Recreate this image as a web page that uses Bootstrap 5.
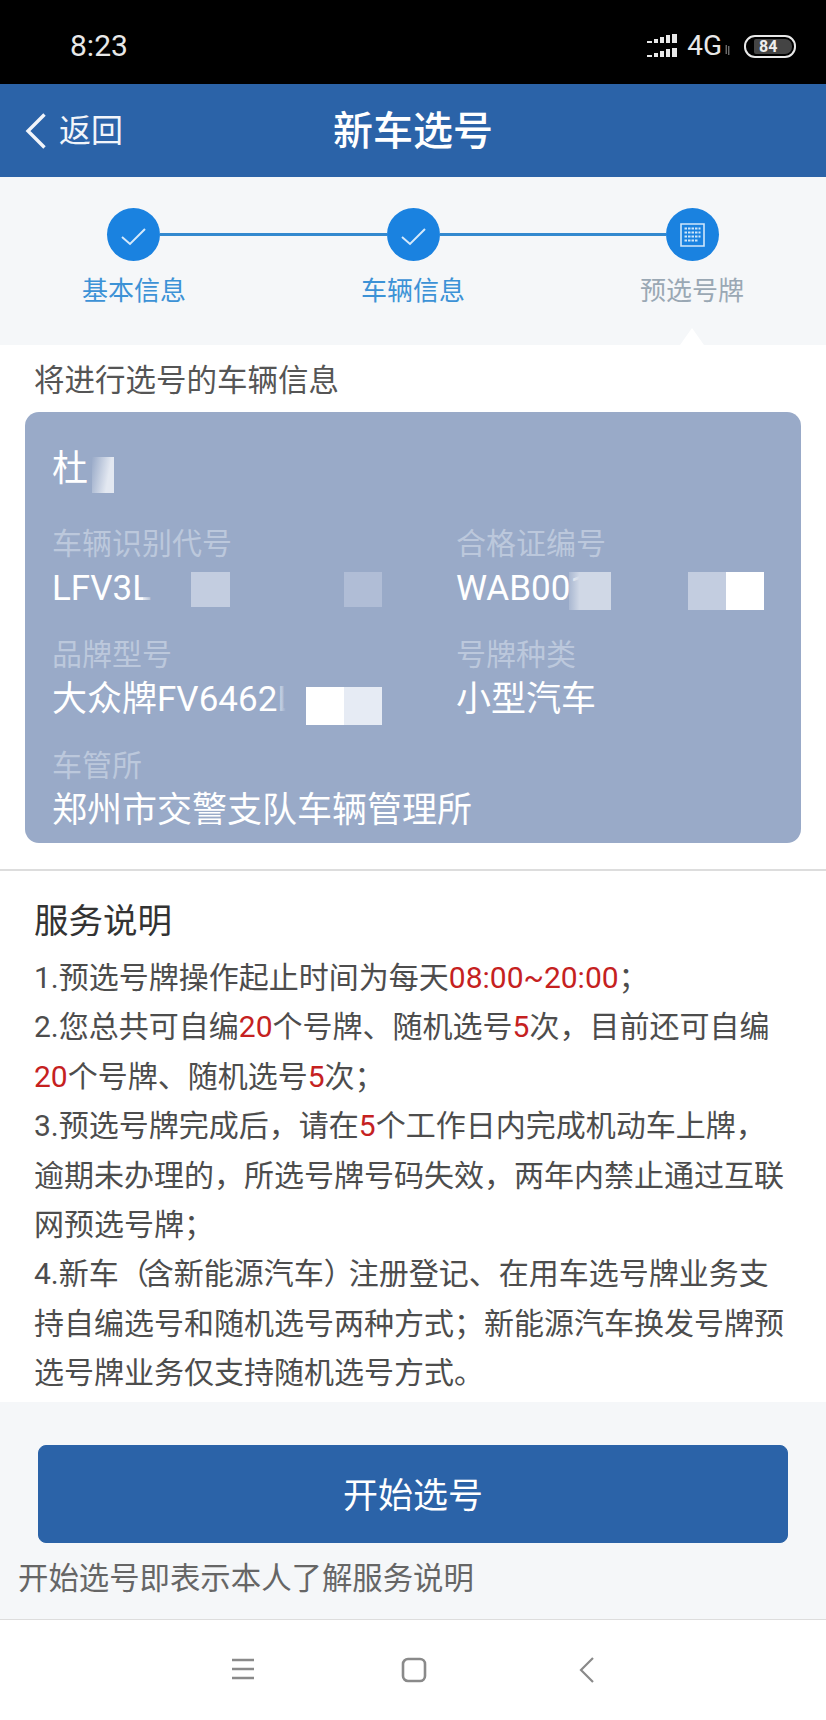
<!DOCTYPE html>
<html lang="zh-CN">
<head>
    <meta charset="UTF-8">
    <title>新车选号</title>
    <meta name="viewport" content="width=device-width, initial-scale=1">
    <link href="https://cdn.jsdelivr.net/npm/bootstrap@5.3.2/dist/css/bootstrap.min.css" rel="stylesheet">
    <script src="https://cdn.jsdelivr.net/npm/bootstrap@5.3.2/dist/js/bootstrap.bundle.min.js"></script>
    <style>
        body {
            font-family: Roboto, "Noto Sans CJK SC", sans-serif;
            background-color: #fff;
            margin: 0;
        }
        .phone {
            width: 826px;
            height: 1720px;
            overflow: hidden;
        }
        /* status bar */
        .status-bar {
            height: 84px;
            background-color: #000;
            color: #e8e8e8;
            padding: 8px 30px 0 70px;
        }
        .status-time {
            font-size: 30px;
            line-height: 32px;
        }
        .status-4g {
            font-size: 28px;
            line-height: 30px;
            margin-left: 10px;
        }
        .status-arrows {
            margin: 8px 14px 0 3px;
        }
        .battery {
            width: 52px;
            height: 23px;
            border: 2px solid #e8e8e8;
            border-radius: 11px;
            padding: 2px 2px 2px 8px;
        }
        .battery-fill {
            height: 100%;
            width: 100%;
            background-color: #444;
            border-radius: 2px 7px 7px 2px;
            color: #eee;
            font-size: 16px;
            font-weight: 700;
            line-height: 15px;
            padding-left: 5px;
        }
        /* title bar */
        .title-bar {
            height: 93px;
            padding-top: 2px;
            background-color: #2b63a8;
            color: #fff;
        }
        .back-link {
            left: 25px;
            top: 28px;
            font-size: 32px;
            line-height: 38px;
            gap: 13px;
            color: #f2f5fa;
        }
        .page-title {
            font-size: 40px;
            font-weight: 500;
            line-height: 50px;
            margin: 0;
        }
        /* steps */
        .steps {
            height: 168px;
            background-color: #f5f7f9;
            padding-top: 31px;
        }
        .step-track {
            padding: 0 107px;
        }
        .step-dot {
            width: 53px;
            height: 53px;
            border-radius: 50%;
            background-color: #1a82e0;
            flex: none;
        }
        .step-line {
            height: 3px;
            background-color: #3389cf;
            flex: 1;
        }
        .step-labels {
            padding: 0 59px;
            margin-top: 10px;
        }
        .step-label {
            width: 150px;
            text-align: center;
            font-size: 26px;
            line-height: 40px;
            color: #3c92d6;
        }
        .step-label-now {
            color: #9aa8b4;
        }
        .step-pointer {
            left: 680px;
            bottom: 0;
            width: 0;
            height: 0;
            border-left: 12px solid transparent;
            border-right: 12px solid transparent;
            border-bottom: 17px solid #fff;
        }
        /* vehicle card */
        .main-area {
            height: 1057px;
            background-color: #fff;
        }
        .sect-hint {
            font-size: 30.5px;
            line-height: 40px;
            color: #555;
            padding: 16px 0 0 34px;
        }
        .vehicle-box {
            height: 431px;
            margin: 11px 25px 0;
            padding: 35px 0 0 27px;
            background-color: #99aac8;
            border-radius: 14px;
            color: #fff;
        }
        .owner-name {
            font-size: 36px;
            line-height: 44px;
            margin-bottom: 33px;
        }
        .veh-row {
            margin-bottom: 24px;
        }
        .veh-col {
            width: 404px;
            flex: none;
        }
        .veh-key {
            font-size: 30px;
            line-height: 40px;
            color: #bcc8dc;
            margin-bottom: 3px;
        }
        .veh-val {
            font-size: 35px;
            line-height: 44px;
            white-space: nowrap;
        }
        .blot {
            position: absolute;
        }
        .blot-name { left: 40px; top: 10px; width: 22px; height: 36px; background: linear-gradient(100deg, #99aac8, #e3e8f1 70%); }
        .blot-a { left: 91px; top: 3px; width: 40px; height: 38px; background: linear-gradient(90deg, rgba(153,170,200,.2), #99aac8 30%); }
        .blot-b { left: 139px; top: 5px; width: 39px; height: 35px; background-color: #c3cde0; }
        .blot-c { left: 292px; top: 5px; width: 38px; height: 35px; background-color: #b0bdd6; }
        .blot-d { left: 113px; top: 5px; width: 42px; height: 38px; background: linear-gradient(90deg, rgba(208,216,230,.3), #d0d8e6 25%); }
        .blot-e { left: 232px; top: 5px; width: 38px; height: 38px; background-color: #c3cde0; }
        .blot-f { left: 270px; top: 5px; width: 38px; height: 38px; background-color: #fff; }
        .blot-g { left: 254px; top: 9px; width: 38px; height: 38px; background-color: #fff; }
        .blot-h { left: 292px; top: 9px; width: 38px; height: 38px; background-color: #e6ebf4; }
        .blot-i { left: 227px; top: 3px; width: 27px; height: 38px; background: linear-gradient(90deg, rgba(153,170,200,.4), #99aac8 25%); }
        /* notes */
        .hr-line {
            height: 2px;
            background-color: #ddd;
            margin-top: 26px;
        }
        .notes {
            padding: 28px 34px 0;
        }
        .notes-title {
            font-size: 34.5px;
            font-weight: 400;
            line-height: 44px;
            color: #333;
            margin-bottom: 10px;
        }
        .notes-line {
            font-size: 30px;
            line-height: 49.4px;
            color: #4d4d4d;
            white-space: nowrap;
        }
        .hl {
            color: #c5211f;
        }
        .paren {
            letter-spacing: -5px;
        }
        /* bottom */
        .action-area {
            height: 218px;
            background-color: #f5f7f9;
            padding-top: 43px;
            border-bottom: 1px solid #ddd;
        }
        .go-btn {
            display: block;
            width: 750px;
            height: 98px;
            margin-left: 38px;
            background-color: #2b63a8;
            border-color: #2b63a8;
            border-radius: 8px;
            color: #fff;
            font-size: 35px;
            line-height: 80px;
            padding: 5px 0 0;
        }
        .action-tip {
            font-size: 30.4px;
            line-height: 40px;
            color: #666;
            padding: 16px 0 0 18px;
        }
        .soft-keys {
            height: 99px;
            background-color: #fff;
            padding: 37px 0 0 232px;
            gap: 147px;
        }
        .soft-back {
            margin-left: 5px;
        }
    </style>
</head>
<body>
    <div class="phone d-flex flex-column">
        <div class="status-bar d-flex align-items-center">
            <span class="status-time">8:23</span>
            <svg class="ms-auto" width="30" height="24" viewBox="0 0 30 24" fill="#e8e8e8">
                <path d="M0 7h5v2H0zM7 5h4v4H7zM13 3h4v6h-4zM19 1h4v8h-4zM25 0h5v9h-5z"/>
                <path d="M0 21h5v2H0zM7 19h4v4H7zM13 17h4v6h-4zM19 15h4v8h-4zM25 14h5v9h-5z"/>
            </svg>
            <span class="status-4g">4G</span>
            <svg class="status-arrows" width="5" height="10" viewBox="0 0 5 10" stroke="#999" fill="none">
                <path d="M1.2 0v9M3.8 1v9"/>
            </svg>
            <div class="battery">
                <div class="battery-fill">84</div>
            </div>
        </div>

        <div class="title-bar position-relative d-flex align-items-center justify-content-center">
            <div class="back-link position-absolute d-flex align-items-center">
                <svg width="21" height="36" viewBox="0 0 21 36" fill="none" stroke="#f2f5fa" stroke-width="3.4">
                    <path d="M19.5 1.5 3 18l16.5 16.5"/>
                </svg>
                <span>返回</span>
            </div>
            <h1 class="page-title">新车选号</h1>
        </div>

        <div class="steps position-relative">
            <div class="step-track d-flex align-items-center">
                <div class="step-dot">
                    <svg width="53" height="53" viewBox="0 0 53 53" fill="none" stroke="#d5e9fb" stroke-width="2">
                        <path d="M15 29l8 7 15-15"/>
                    </svg>
                </div>
                <div class="step-line"></div>
                <div class="step-dot">
                    <svg width="53" height="53" viewBox="0 0 53 53" fill="none" stroke="#d5e9fb" stroke-width="2">
                        <path d="M15 29l8 7 15-15"/>
                    </svg>
                </div>
                <div class="step-line"></div>
                <div class="step-dot">
                    <svg width="53" height="53" viewBox="0 0 53 53" fill="none" stroke="#cfe6fa" stroke-width="1.6">
                        <path d="M38 16H15v22h23z"/>
                        <path d="M18.500 20.500h16M18.500 24.500h16M18.500 28.500h16M18.500 32.500h13" stroke-width="2" stroke-dasharray="2.500 1"/>
                    </svg>
                </div>
            </div>
            <div class="step-labels d-flex justify-content-between">
                <div class="step-label">基本信息</div>
                <div class="step-label">车辆信息</div>
                <div class="step-label step-label-now">预选号牌</div>
            </div>
            <div class="step-pointer position-absolute"></div>
        </div>

        <div class="main-area">
            <div class="sect-hint">将进行选号的车辆信息</div>
            <div class="vehicle-box">
                <div class="owner-name position-relative">杜<span class="blot blot-name"></span></div>
                <div class="veh-row d-flex">
                    <div class="veh-col">
                        <div class="veh-key">车辆识别代号</div>
                        <div class="veh-val position-relative">LFV3L<span class="blot blot-a"></span><span class="blot blot-b"></span><span class="blot blot-c"></span></div>
                    </div>
                    <div class="veh-col">
                        <div class="veh-key">合格证编号</div>
                        <div class="veh-val position-relative">WAB001<span class="blot blot-d"></span><span class="blot blot-e"></span><span class="blot blot-f"></span></div>
                    </div>
                </div>
                <div class="veh-row d-flex">
                    <div class="veh-col">
                        <div class="veh-key">品牌型号</div>
                        <div class="veh-val position-relative">大众牌FV6462L<span class="blot blot-i"></span><span class="blot blot-g"></span><span class="blot blot-h"></span></div>
                    </div>
                    <div class="veh-col">
                        <div class="veh-key">号牌种类</div>
                        <div class="veh-val">小型汽车</div>
                    </div>
                </div>
                <div class="veh-row">
                    <div class="veh-key">车管所</div>
                    <div class="veh-val">郑州市交警支队车辆管理所</div>
                </div>
            </div>
            <div class="hr-line"></div>
            <div class="notes">
                <h2 class="notes-title">服务说明</h2>
                <div class="notes-line">1.预选号牌操作起止时间为每天<span class="hl">08:00~20:00</span>；</div>
                <div class="notes-line">2.您总共可自编<span class="hl">20</span>个号牌、随机选号<span class="hl">5</span>次，目前还可自编</div>
                <div class="notes-line"><span class="hl">20</span>个号牌、随机选号<span class="hl">5</span>次；</div>
                <div class="notes-line">3.预选号牌完成后，请在<span class="hl">5</span>个工作日内完成机动车上牌，</div>
                <div class="notes-line">逾期未办理的，所选号牌号码失效，两年内禁止通过互联</div>
                <div class="notes-line">网预选号牌；</div>
                <div class="notes-line">4.新车<span class="paren">（</span>含新能源汽车<span class="paren">）</span>注册登记、在用车选号牌业务支</div>
                <div class="notes-line">持自编选号和随机选号两种方式；新能源汽车换发号牌预</div>
                <div class="notes-line">选号牌业务仅支持随机选号方式。</div>
            </div>
        </div>

        <div class="action-area">
            <button type="button" class="btn go-btn">开始选号</button>
            <div class="action-tip">开始选号即表示本人了解服务说明</div>
        </div>

        <div class="soft-keys d-flex align-items-start">
            <svg width="22" height="24" viewBox="0 0 22 24" stroke="#8a8a8a" stroke-width="2.4" fill="none">
                <path d="M0 3h22M0 12h22M0 21h22"/>
            </svg>
            <svg width="26" height="26" viewBox="0 0 26 26" stroke="#8a8a8a" stroke-width="2.6" fill="none">
                <rect x="2" y="2" width="22" height="22" rx="5"/>
            </svg>
            <svg class="soft-back" width="16" height="26" viewBox="0 0 16 26" stroke="#8a8a8a" stroke-width="2.2" fill="none">
                <path d="M14 1 2 13l12 12"/>
            </svg>
        </div>
    </div>
</body>
</html>
